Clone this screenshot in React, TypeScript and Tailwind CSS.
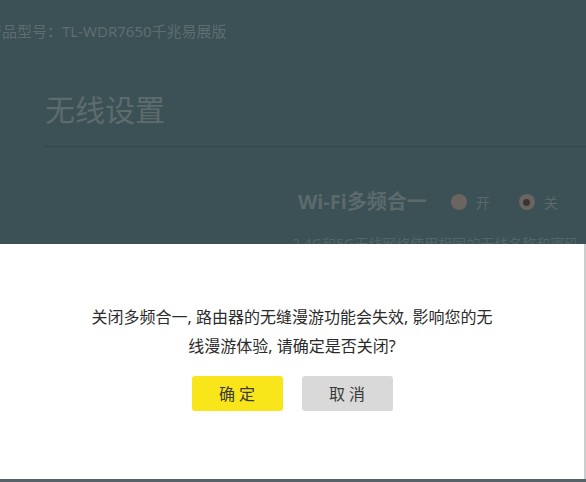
export default function App() {
  const font = { fontFamily: '"Noto Sans", "Noto Sans CJK SC", sans-serif' };
  return (
    <div className="relative w-[586px] h-[482px] overflow-hidden bg-[#3b5156]" style={font}>
      <div className="flex flex-col">
        <div className="h-[62px] pl-0 flex items-center">
          <span className="ml-[-13px] text-[15px] text-[#5f6d70] whitespace-nowrap">产品型号：TL-WDR7650千兆易展版</span>
        </div>
        <div className="pl-[45px] pt-[28px]">
          <div className="text-[30px] leading-[40px] text-[#5e6b6d]">无线设置</div>
          <div className="mt-[16px] h-px bg-[#33464a]" />
        </div>
        <div className="pl-[298px] pt-[40px] flex items-center">
          <span className="text-[20px] font-bold text-[#5d6a6c] whitespace-nowrap">Wi-Fi多频合一</span>
          <span className="ml-[24px] w-[16px] h-[16px] rounded-full bg-[#6b6562]" />
          <span className="ml-[9px] text-[14px] text-[#5a686a]">开</span>
          <span className="ml-[29px] w-[16px] h-[16px] rounded-full bg-[#6b6562] flex items-center justify-center">
            <span className="w-[7px] h-[7px] rounded-full bg-[#3a3434]" />
          </span>
          <span className="ml-[9px] text-[14px] text-[#5a686a]">关</span>
        </div>
        <div className="pl-[292px] pt-[16px] text-[14px] text-[#53656a] whitespace-nowrap">2.4G和5G无线网络使用相同的无线名称和密码</div>
      </div>
      <div className="absolute left-0 top-[244px] w-[586px] h-[235px] bg-white border-r-2 border-[#c9cfd1] flex flex-col items-center pt-[59px]">
        <div className="text-[16px] leading-[29px] text-[#2b2b2b] text-center whitespace-nowrap">
          关闭多频合一, 路由器的无缝漫游功能会失效, 影响您的无<br />线漫游体验, 请确定是否关闭?
        </div>
        <div className="mt-[15px] flex gap-[19px]">
          <button className="w-[91px] h-[35px] rounded-[3px] bg-[#f8e51a] text-[16px] text-[#3a3a3a]">确 定</button>
          <button className="w-[91px] h-[35px] rounded-[3px] bg-[#d9d9d9] text-[16px] text-[#3a3a3a]">取 消</button>
        </div>
      </div>
      <div className="absolute left-0 top-[479px] w-[586px] h-[3px] bg-[#566268]" />
    </div>
  );
}
